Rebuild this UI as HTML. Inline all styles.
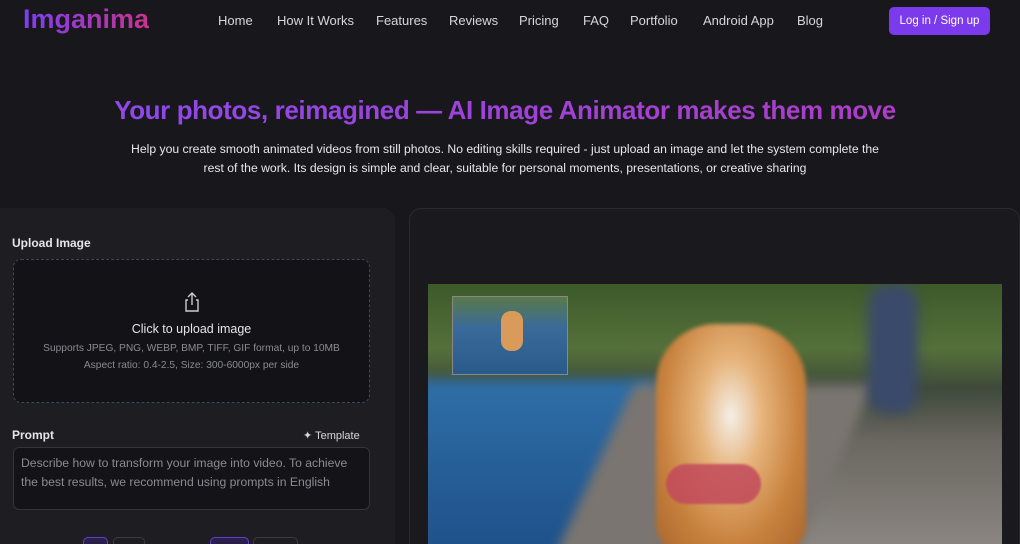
<!DOCTYPE html>
<html><head><meta charset="utf-8"><style>
*{margin:0;padding:0;box-sizing:border-box}
html,body{width:1020px;height:544px;overflow:hidden}
body{background:#18171c;font-family:"Liberation Sans",sans-serif;color:#e6e6ea;position:relative}
.logo{position:absolute;left:23px;top:4px;font-size:27px;font-weight:bold;background:linear-gradient(90deg,#7b3ff0,#c9338f);-webkit-background-clip:text;color:transparent}
.nav{position:absolute;top:13px;font-size:13px;color:#d6d6dc}
.btn{position:absolute;left:889px;top:7px;width:101px;height:28px;background:#7c3aed;border-radius:5px;font-size:11.5px;color:#fff;text-align:center;line-height:28px}
h1{position:absolute;left:0;width:1010px;top:95px;text-align:center;font-size:26px;font-weight:bold;background:linear-gradient(90deg,#8b4af0,#b03cc0);-webkit-background-clip:text;color:transparent;letter-spacing:-0.4px}
.sub{position:absolute;left:120px;width:770px;top:140px;text-align:center;font-size:12.2px;line-height:19px;color:#e8e8ec}
.lp{position:absolute;left:0;top:208px;width:395px;height:336px;background:#1e1d22;border-radius:0 12px 0 0}
.rp{position:absolute;left:409px;top:208px;width:611px;height:336px;background:#1a191e;border:1px solid #2a2a30;border-bottom:none;border-radius:12px 12px 0 0}
.lbl{position:absolute;left:12px;font-size:12px;font-weight:bold;color:#e6e6ea}
.up{position:absolute;left:13px;top:259px;width:357px;height:144px;border:1.5px dashed #3f4858;border-radius:8px;background:#131317;text-align:center}
.ta{position:absolute;left:13px;top:447px;width:357px;height:63px;border:1px solid #34343c;border-radius:6px;background:#141418;padding:6px 7px;font-size:12.2px;line-height:19px;color:#8a8a92}
.img{position:absolute;left:428px;top:284px;width:574px;height:260px;overflow:hidden;background:linear-gradient(180deg,#3c5a2a 0%,#55703a 25%,#3e4a3a 40%,#6a6660 60%,#8a8580 100%)}
.bl{filter:blur(6px)}
.pill{position:absolute;top:537px;height:7px;border-radius:5px 5px 0 0;border:1px solid #3a3a42;border-bottom:none}
</style></head><body>
<div class="logo">Imganima</div>
<div class="nav" style="left:218px">Home</div>
<div class="nav" style="left:277px">How It Works</div>
<div class="nav" style="left:376px">Features</div>
<div class="nav" style="left:449px">Reviews</div>
<div class="nav" style="left:519px">Pricing</div>
<div class="nav" style="left:583px">FAQ</div>
<div class="nav" style="left:630px">Portfolio</div>
<div class="nav" style="left:703px">Android App</div>
<div class="nav" style="left:797px">Blog</div>
<div class="btn">Log in / Sign up</div>
<h1>Your photos, reimagined — AI Image Animator makes them move</h1>
<div class="sub">Help you create smooth animated videos from still photos. No editing skills required - just upload an image and let the system complete the rest of the work. Its design is simple and clear, suitable for personal moments, presentations, or creative sharing</div>
<div class="lp"></div>
<div class="rp"></div>
<div class="lbl" style="top:236px">Upload Image</div>
<div class="up">
<svg style="margin-top:31px" width="20" height="22" viewBox="0 0 20 22" fill="none" stroke="#ccc" stroke-width="1.4"><path d="M10 2v12M6 6l4-4 4 4M6 9H4v11h12V9h-2"/></svg>
<div style="font-size:12.5px;color:#e6e6ea;margin-top:4px">Click to upload image</div>
<div style="font-size:10.2px;color:#8a8a92;margin-top:7px">Supports JPEG, PNG, WEBP, BMP, TIFF, GIF format, up to 10MB</div>
<div style="font-size:10.2px;color:#8a8a92;margin-top:6px">Aspect ratio: 0.4-2.5, Size: 300-6000px per side</div>
</div>
<div class="lbl" style="top:428px">Prompt</div>
<div style="position:absolute;left:303px;top:429px;font-size:11px;color:#d6d6dc">✦ Template</div>
<div class="ta">Describe how to transform your image into video. To achieve the best results, we recommend using prompts in English</div>
<div class="pill" style="left:83px;width:25px;border-color:#6a3fd0;background:#2a1f4a"></div>
<div class="pill" style="left:113px;width:32px"></div>
<div class="pill" style="left:210px;width:39px;border-color:#6a3fd0;background:#2a1f4a"></div>
<div class="pill" style="left:253px;width:45px"></div>
<div class="img">
<div class="bl" style="position:absolute;left:-10px;top:95px;width:240px;height:180px;background:linear-gradient(180deg,#2f6fa8,#1d4f88);"></div>
<div class="bl" style="position:absolute;left:160px;top:100px;width:240px;height:200px;background:#7a7570;transform:skewX(-25deg)"></div>
<div class="bl" style="position:absolute;left:440px;top:0;width:50px;height:130px;background:#3a4a6a;border-radius:20px"></div>
<div style="position:absolute;left:228px;top:40px;width:150px;height:230px;border-radius:60px 60px 30px 30px;background:radial-gradient(ellipse at 50% 40%,#f4efe8 0%,#e6b37a 30%,#c8823e 65%,#a8652c 100%);filter:blur(2px)"></div>
<div style="position:absolute;left:238px;top:180px;width:95px;height:40px;border-radius:20px;background:#c24a5c;opacity:.85;filter:blur(1px)"></div>
<div style="position:absolute;left:24px;top:12px;width:116px;height:79px;overflow:hidden;background:linear-gradient(180deg,#5a7a4a 0%,#3a6a9a 40%,#2a5a8a 100%);border:1px solid #888"><div style="position:absolute;left:48px;top:14px;width:22px;height:40px;border-radius:10px;background:#d99a5a"></div></div>
</div>
</body></html>
